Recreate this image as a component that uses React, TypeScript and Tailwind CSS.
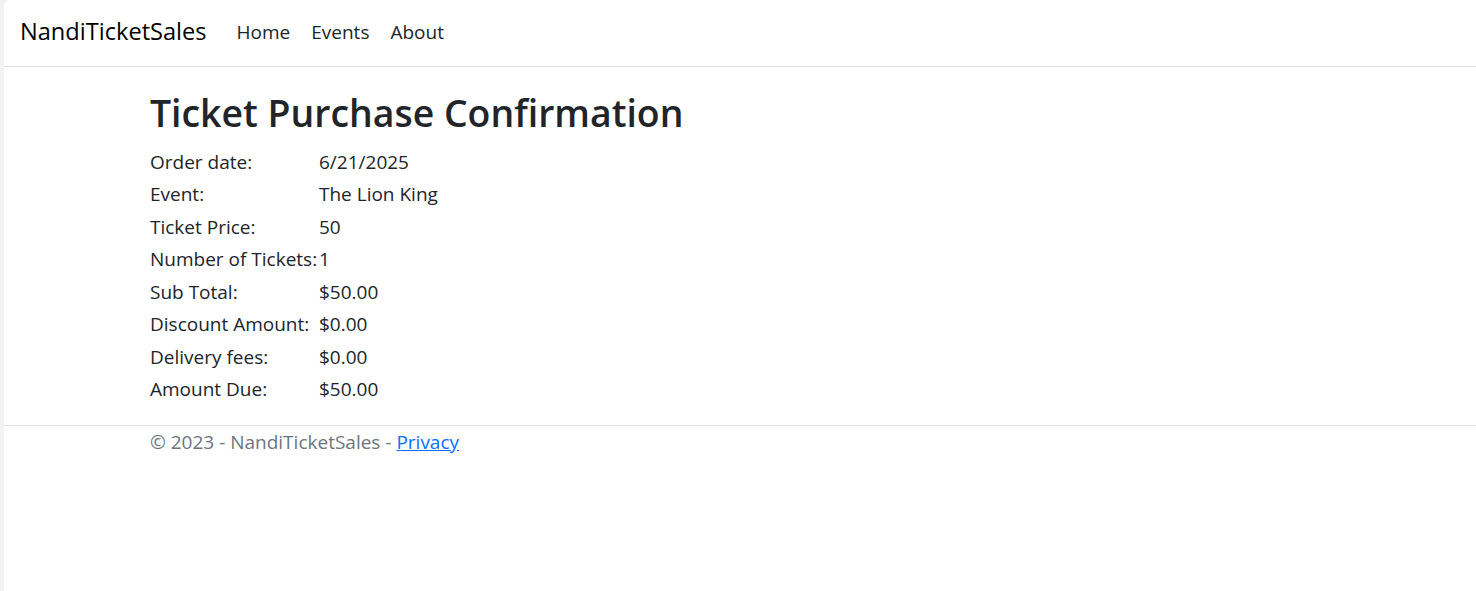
import React from 'react';

const rows: [string, string][] = [
  ['Order date:', '6/21/2025'],
  ['Event:', 'The Lion King'],
  ['Ticket Price:', '50'],
  ['Number of Tickets:', '1'],
  ['Sub Total:', '$50.00'],
  ['Discount Amount:', '$0.00'],
  ['Delivery fees:', '$0.00'],
  ['Amount Due:', '$50.00'],
];

export default function App() {
  return (
    <div className="flex h-[591px] w-full bg-[#f2f2f2] font-['Open_Sans',sans-serif] text-[#212529]">
      <div className="w-[4px] shrink-0" />
      <div className="flex flex-1 flex-col rounded-tl-[6px] bg-white">
        {/* Navbar */}
        <nav className="flex h-[67px] items-center border-b border-[#dee2e6] px-[16px] pb-[2px]">
          <span className="mr-[30px] text-[23.6px] text-black">NandiTicketSales</span>
          <a className="mr-[21px] text-[19px]">Home</a>
          <a className="mr-[21px] text-[19px]">Events</a>
          <a className="text-[19px]">About</a>
        </nav>

        <main className="pb-[19px] pl-[146px] pt-[23px]">
          <h1 className="mb-[10px] text-[37.4px] font-semibold leading-[45.6px]">Ticket Purchase Confirmation</h1>
          <div className="grid grid-cols-[169px_auto] justify-start text-[19px] leading-[26.5px]">
            {rows.map(([label, value]) => (
              <React.Fragment key={label}>
                <div className="flex h-[32.5px] items-center whitespace-nowrap">{label}</div>
                <div className="flex h-[32.5px] items-center whitespace-nowrap">{value}</div>
              </React.Fragment>
            ))}
          </div>
        </main>

        <footer className="border-t border-[#dee2e6] pl-[146px] pt-[3px] text-[19px] leading-[26.5px] text-[#6c757d]">
          © 2023 - NandiTicketSales - <a className="text-[#0d6efd] underline">Privacy</a>
        </footer>
      </div>
    </div>
  );
}
